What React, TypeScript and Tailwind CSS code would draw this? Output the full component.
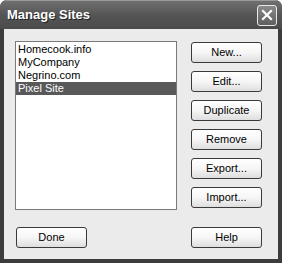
const sites = ["Homecook.info", "MyCompany", "Negrino.com", "Pixel Site"];
const actions = ["New...", "Edit...", "Duplicate", "Remove", "Export...", "Import..."];

function XpButton({ label }: { label: string }) {
  return (
    <button className="h-[21px] w-[71px] rounded-[3px] border border-[#3a3a3a] bg-gradient-to-b from-white via-[#f6f6f6] to-[#dedede] text-[11px] leading-none text-black">
      {label}
    </button>
  );
}

export default function App() {
  return (
    <div
      className="flex h-[263px] w-[282px] flex-col overflow-hidden rounded-t-[7px] bg-[#3c3c3c]"
      style={{ fontFamily: '"Liberation Sans", Arial, sans-serif' }}
    >
      {/* Title bar */}
      <div className="flex h-[29px] items-center justify-between border-t border-[#9a9a9a] bg-gradient-to-b from-[#707070] via-[#555555] to-[#4a4a4a] pl-[7px] pr-[5px]">
        <span className="text-[13px] font-bold text-white [text-shadow:1px_1px_0_#222]">
          Manage Sites
        </span>
        <div className="flex h-[21px] w-[20px] items-center justify-center rounded-[3px] border border-[#e8e8e8] bg-gradient-to-b from-[#8a8a8a] to-[#5e5e5e]">
          <svg width="12" height="12" viewBox="0 0 12 12">
            <path d="M2 2 L10 10 M10 2 L2 10" stroke="white" strokeWidth="2.2" strokeLinecap="square" />
          </svg>
        </div>
      </div>

      {/* Body */}
      <div className="mx-[4px] mb-[4px] flex flex-1 flex-col bg-[#ebebeb] pl-[11px] pr-[16px] pt-[12px]">
        <div className="flex">
          <ul className="h-[169px] w-[162px] border border-[#7a7a7a] bg-white pt-[1px] text-[11px] text-black">
            {sites.map((site, i) => (
              <li
                key={site}
                className={`flex h-[13px] items-center pl-[2px] ${i === 3 ? "bg-[#595959] text-white" : ""}`}
              >
                {site}
              </li>
            ))}
          </ul>
          <div className="ml-[14px] flex flex-col gap-[8px] pt-[1px]">
            {actions.map((a) => (
              <XpButton key={a} label={a} />
            ))}
          </div>
        </div>
        <div className="mt-[17px] flex justify-between pl-[1px]">
          <XpButton label="Done" />
          <XpButton label="Help" />
        </div>
      </div>
    </div>
  );
}
